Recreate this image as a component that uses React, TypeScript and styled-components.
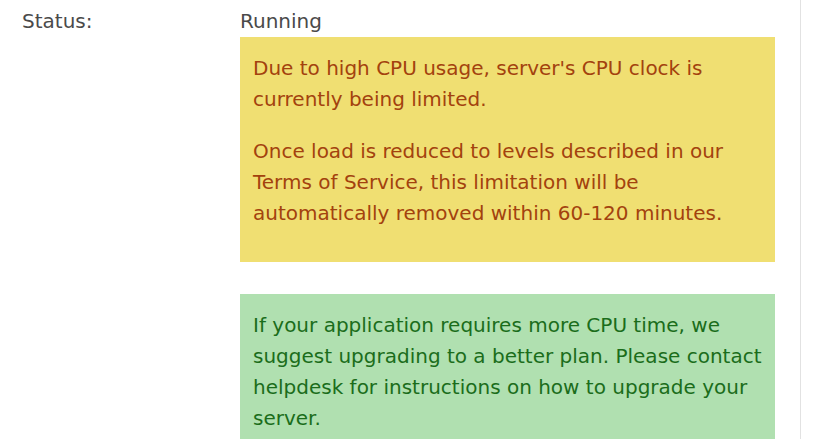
import styled, { createGlobalStyle } from 'styled-components'

const GlobalStyle = createGlobalStyle`
  html, body {
    margin: 0;
    padding: 0;
    background: #ffffff;
  }
  body {
    font-family: 'DejaVu Sans', Verdana, sans-serif;
    font-size: 20px;
    color: #444444;
  }
`

const Page = styled.div`
  width: 800px;
  height: 439px;
  border-right: 1px solid #e2e2e2;
  overflow: hidden;
`

const Row = styled.div`
  display: grid;
  grid-template-columns: 218px 535px;
  padding: 6px 0 0 22px;
  line-height: 31px;
`

const Label = styled.div`
  color: #4a4a4a;
`

const Value = styled.div`
  display: flex;
  flex-direction: column;
  color: #4a4a4a;
`

const Notice = styled.div<{ tone: 'warning' | 'success' }>`
  background: ${({ tone }) => (tone === 'warning' ? '#f0df72' : '#b0e0b0')};
  color: ${({ tone }) => (tone === 'warning' ? '#a3420e' : '#1b6d1b')};
  padding: 16px 13px 33px;
  margin-bottom: 32px;
  line-height: 31px;

  p {
    margin: 0 0 21px;
  }
  p:last-child {
    margin-bottom: 0;
  }
`

export default function App() {
  return (
    <>
      <GlobalStyle />
      <Page>
        <Row>
          <Label>Status:</Label>
          <Value>
            Running
            <Notice tone="warning">
              <p>Due to high CPU usage, server's CPU clock is currently being limited.</p>
              <p>
                Once load is reduced to levels described in our Terms of Service, this limitation
                will be automatically removed within 60-120 minutes.
              </p>
            </Notice>
            <Notice tone="success">
              <p>
                If your application requires more CPU time, we suggest upgrading to a better plan.
                Please contact helpdesk for instructions on how to upgrade your server.
              </p>
            </Notice>
          </Value>
        </Row>
      </Page>
    </>
  )
}
